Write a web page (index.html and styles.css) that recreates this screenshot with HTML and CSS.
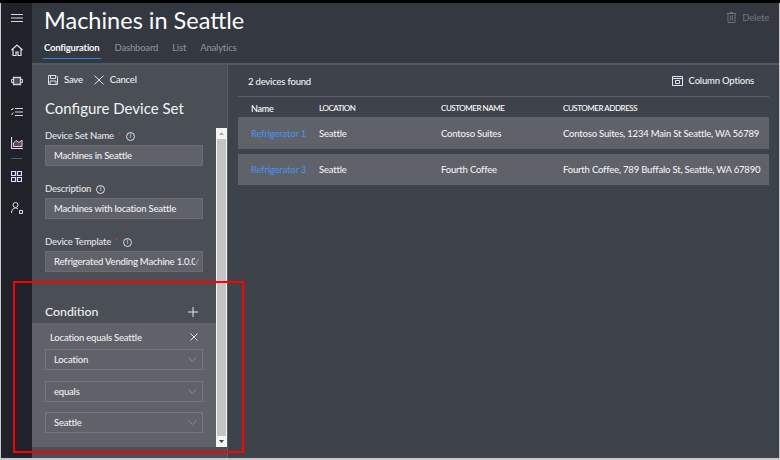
FILE: index.html
```html
<!DOCTYPE html>
<html lang="en">
<head>
<meta charset="utf-8">
<title>Machines in Seattle</title>
<link rel="stylesheet" href="styles.css">
</head>
<body>
<div class="frame">
  <nav class="rail">
    <div class="rail-item rail-menu"><svg viewBox="0 0 12 8" width="12" height="8"><path d="M0 .5h12M0 4h12M0 7.500h12" stroke="#d8d8dc" fill="none"/></svg></div>
    <div class="rail-item"><svg viewBox="0 0 12 12" width="12" height="12"><path d="M.5 6 6 1l5.500 5M2 5v6.500h3V8h2v3.500h3V5" stroke="#dfe0f0" stroke-width="1.200" fill="none"/></svg></div>
    <div class="rail-item"><svg viewBox="0 0 12 10" width="12" height="10"><path d="M2.500 1.500h7v7h-7z" stroke="#cfd0d8" stroke-width="1.400" fill="#4a4d55"/><path d="M.5 3.500h2v3h-2zM9.500 3.500h2v3h-2z" stroke="#cfd0d8" fill="none"/></svg></div>
    <div class="rail-item"><svg viewBox="0 0 12 10" width="12" height="10"><path d="M4 1.500h8M4 5h8M4 8.500h8M0 2l1 1 1.500-2M0 6.500l1 1 1.500-2" stroke="#d8d8dc" fill="none"/></svg></div>
    <div class="rail-item"><svg viewBox="0 0 12 12" width="12" height="12"><path d="M2.500 9.500V6L5 3.500 8 5.500 11 3v6.500z" stroke="#f0c8e0" fill="#5a4a5a"/><path d="M.5 0v11.500H12" stroke="#e4d6ff" stroke-width="1.200" fill="none"/></svg></div>
    <div class="rail-rule"></div>
    <div class="rail-item"><svg viewBox="0 0 11 11" width="11" height="11"><path d="M.5.500h4v4h-4zM6.500.5h4v4h-4zM.5 6.500h4v4h-4zM6.500 6.500h4v4h-4z" stroke="#e4dcff" stroke-width="1.200" fill="none"/></svg></div>
    <div class="rail-item"><svg viewBox="0 0 12 12" width="12" height="12"><circle cx="4.500" cy="3" r="2.500" stroke="#e0e0e4" fill="none"/><path d="M.5 11c0-3 1.500-5 4-5 1 0 2 .4 2.500 1M8.500 8.500h3v3h-3z" stroke="#e0e0e4" fill="none"/></svg></div>
  </nav>
  <main class="main">
    <header class="header">
      <div class="title-row">
        <h1 class="page-title">Machines in Seattle</h1>
        <div class="delete"><svg viewBox="0 0 9 11" width="9" height="11"><path d="M0 1.500h9M3 1.500V.5h3v1M1 1.500v9h7v-9M3.500 3.500v5M5.500 3.500v5" stroke="#6f7378" fill="none"/></svg><span>Delete</span></div>
      </div>
      <div class="tabs">
        <span class="tab tab-active">Configuration</span>
        <span class="tab">Dashboard</span>
        <span class="tab">List</span>
        <span class="tab">Analytics</span>
      </div>
    </header>
    <div class="content">
      <aside class="config">
        <div class="toolbar">
          <span class="tool"><svg viewBox="0 0 10 10" width="10" height="10"><path d="M.5.500h7.500l1.500 1.500v7.500H.5zM2.500.5v3h5v-3M2 9.500V6h6v3.500" stroke="#dcdce8" fill="none"/></svg>Save</span>
          <span class="tool"><svg viewBox="0 0 10 10" width="10" height="10"><path d="M.5.500l9 9M9.500.5l-9 9" stroke="#e0e0e4" fill="none"/></svg>Cancel</span>
        </div>
        <h2 class="config-title">Configure Device Set</h2>
        <div class="scroll">
          <div class="form">
            <div class="fields">
              <div class="field">
                <label class="label">Device Set Name <span class="req">*</span><span class="info">i</span></label>
                <div class="input">Machines in Seattle</div>
              </div>
              <div class="field">
                <label class="label">Description<span class="info">i</span></label>
                <div class="input">Machines with location Seattle</div>
              </div>
              <div class="field">
                <label class="label">Device Template <span class="req">*</span><span class="info">i</span></label>
                <div class="input input-clip"><span class="clip">Refrigerated Vending Machine 1.0.0</span><svg class="chev-small" viewBox="0 0 4 8" width="4" height="8"><path d="M.5 7.500 3.500 1" stroke="#a0a3a8" fill="none"/></svg></div>
              </div>
            </div>
            <div class="cond-head">
              <span class="cond-title">Condition</span>
              <svg viewBox="0 0 10 10" width="10" height="10"><path d="M5 0v10M0 5h10" stroke="#e4e4e6" fill="none"/></svg>
            </div>
            <div class="cond-body">
              <div class="cond-row">
                <span>Location equals Seattle</span>
                <svg viewBox="0 0 8 8" width="8" height="8"><path d="M.5.500l7 7M7.500.5l-7 7" stroke="#e4e4e6" fill="none"/></svg>
              </div>
              <div class="select">Location<svg class="chev" viewBox="0 0 9 5" width="9" height="5"><path d="M.5.500 4.500 4.500 8.500.5" stroke="#85888e" fill="none"/></svg></div>
              <div class="select">equals<svg class="chev" viewBox="0 0 9 5" width="9" height="5"><path d="M.5.500 4.500 4.500 8.500.5" stroke="#85888e" fill="none"/></svg></div>
              <div class="select">Seattle<svg class="chev" viewBox="0 0 9 5" width="9" height="5"><path d="M.5.500 4.500 4.500 8.500.5" stroke="#85888e" fill="none"/></svg></div>
            </div>
          </div>
          <div class="scrollbar">
            <div class="sb-btn"><svg viewBox="0 0 5 3" width="5" height="3"><path d="M0 3 2.500 0 5 3z" fill="#a8a8a8"/></svg></div>
            <div class="sb-thumb"></div>
            <div class="sb-btn"><svg viewBox="0 0 5 3" width="5" height="3"><path d="M0 0 2.500 3 5 0z" fill="#404040"/></svg></div>
          </div>
        </div>
      </aside>
      <section class="devices">
        <div class="devices-bar">
          <span class="found">2 devices found</span>
          <span class="col-opts"><svg viewBox="0 0 11 10" width="11" height="10"><path d="M.5.500h10v9H.5zM.5 2.500h10M3.500 4.500h4v3h-4z" stroke="#e4e0f4" fill="none"/></svg>Column Options</span>
        </div>
        <table class="table">
          <thead>
            <tr><th class="name-col">Name</th><th class="upper loc-col">LOCATION</th><th class="upper cust-col">CUSTOMER NAME</th><th class="upper">CUSTOMER ADDRESS</th></tr>
          </thead>
          <tbody>
            <tr class="row-first"><td><a class="link">Refrigerator 1</a></td><td>Seattle</td><td>Contoso Suites</td><td>Contoso Suites, 1234 Main St Seattle, WA 56789</td></tr>
            <tr class="spacer"><td colspan="4"></td></tr>
            <tr><td><a class="link">Refrigerator 3</a></td><td>Seattle</td><td>Fourth Coffee</td><td>Fourth Coffee, 789 Buffalo St, Seattle, WA 67890</td></tr>
          </tbody>
        </table>
      </section>
    </div>
  </main>
  <div class="callout"></div>
</div>
</body>
</html>
```
FILE: styles.css
```css
* { box-sizing: border-box; }
html, body { margin: 0; padding: 0; }
body { width: 780px; height: 460px; overflow: hidden; background: #c9c9c9; font-family: Lato, "Open Sans", sans-serif; font-size: 9.500px; font-weight: 500; letter-spacing: -.2px; color: #f0f0f2; }
.frame { position: relative; width: 780px; height: 460px; display: flex; padding: 3px 1px 2px 1px; }
.frame::before { content: ""; position: absolute; left: 0; right: 0; top: 0; height: 3px; background: #000; }
.rail { width: 31px; flex: none; background: #1f2229; display: flex; flex-direction: column; align-items: center; padding-top: 7px; }
.rail-item { height: 31px; width: 100%; display: flex; align-items: center; justify-content: center; flex: none; }
.rail-menu { height: 16px; }
.rail-item:nth-child(2) { margin-top: 8px; }
.rail-rule { width: 11px; height: 1px; background: #5a5d63; margin: 0 0 2px; flex: none; }
.main { flex: 1; min-width: 0; display: flex; flex-direction: column; background: #3e424b; }
.header { height: 62px; background: #343840; border-bottom: 2px solid #55585e; padding: 0 0 0 12px; flex: none; }
.title-row { display: flex; justify-content: space-between; align-items: flex-start; height: 34px; }
.page-title { margin: 1px 0 0; font-size: 23.500px; line-height: 32px; font-weight: 400; color: #fff; letter-spacing: 0; }
.delete { display: flex; align-items: center; gap: 6px; color: #6f7378; margin: 9px 10px 0 0; }
.tabs { display: flex; gap: 14px; margin-top: 1px; }
.tab { line-height: 19px; height: 21px; color: #8d9096; }
.tab-active { color: #f6f6f8; font-weight: 700; border-bottom: 1.500px solid #2f86e0; padding: 0 1px; margin-left: -1px; }
.content { flex: 1; min-height: 0; display: flex; }
.config { width: 196px; flex: none; background: #4a4e55; border-right: 1px solid #5a5d63; display: flex; flex-direction: column; padding-bottom: 11px; }
.toolbar { display: flex; gap: 11px; padding: 8px 0 0 16px; height: 29px; }
.tool { display: flex; align-items: center; gap: 6px; line-height: 14px; height: 14px; }
.config-title { margin: 0 0 0 13px; font-size: 15px; line-height: 20px; font-weight: 400; color: #f4f4f5; height: 34px; padding-top: 4px; letter-spacing: 0; }
.scroll { flex: 1; min-height: 0; display: flex; }
.form { width: 184px; flex: none; display: flex; flex-direction: column; }
.fields { padding: 0 13px; height: 172px; }
.field { height: 53px; }
.label { display: flex; align-items: center; line-height: 14px; height: 17px; padding-bottom: 1px; color: #e4e5e8; }
.req { color: #c23a3a; margin-left: 3px; }
.info { display: inline-flex; align-items: center; justify-content: center; width: 9px; height: 9px; border: 1px solid #e0e0e3; border-radius: 50%; font-size: 6.500px; line-height: 1; margin-left: 5px; font-family: "Liberation Sans", sans-serif; color: #e0e0e3; }
.input { height: 21px; width: 158px; border: 1px solid #6a6d73; background: #5f6269; line-height: 19px; padding-left: 8px; white-space: nowrap; }
.input-clip { display: flex; align-items: center; justify-content: space-between; padding-right: 3px; }
.clip { overflow: hidden; flex: 1; min-width: 0; }
.chev-small { flex: none; }
.cond-head { height: 23px; display: flex; align-items: center; justify-content: space-between; padding: 0 18px 0 13px; flex: none; }
.cond-title { font-size: 12.300px; letter-spacing: 0; color: #eeeef0; }
.cond-body { flex: 1; background: #5f6269; padding: 0 13px; }
.cond-row { height: 26px; display: flex; align-items: center; justify-content: space-between; padding: 2px 5px 0 5px; }
.select { height: 21px; width: 158px; border: 1px solid #73767b; line-height: 19px; padding: 0 5px 0 8px; margin-bottom: 10.500px; display: flex; align-items: center; justify-content: space-between; }
.scrollbar { width: 11px; flex: none; background: #f4f4f4; display: flex; flex-direction: column; }
.sb-btn { height: 11px; display: flex; align-items: center; justify-content: center; flex: none; }
.sb-thumb { flex: 1; background: #c4c4c4; margin: 0 1px; }
.devices { flex: 1; min-width: 0; padding: 0 10px 0 10px; }
.devices-bar { height: 32px; display: flex; align-items: center; justify-content: space-between; padding: 0 15px 0 10px; border-bottom: 1px solid #5a5d63; }
.found { padding-top: 2px; }
.col-opts { display: flex; align-items: center; gap: 6px; }
.table { width: 531px; border-collapse: collapse; table-layout: fixed; }
.table th { text-align: left; font-weight: 500; font-size: 8px; letter-spacing: -.45px; height: 20px; padding: 2px 0 0; white-space: nowrap; color: #fff; }
.table th.name-col { width: 81px; padding-left: 13px; font-size: 9px; letter-spacing: -.2px; }
.loc-col { width: 122px; }
.cust-col { width: 122px; }
.table td { background: #5f6269; height: 31px; padding: 0; white-space: nowrap; }
.table .row-first td { height: 32px; }
.table td:first-child { padding-left: 13px; }
.table .spacer td { background: transparent; height: 5px; padding: 0; }
.link { color: #4493ea; }
.callout { position: absolute; left: 13px; top: 281px; width: 231px; height: 172px; border: 2.500px solid #f00; pointer-events: none; }
```
